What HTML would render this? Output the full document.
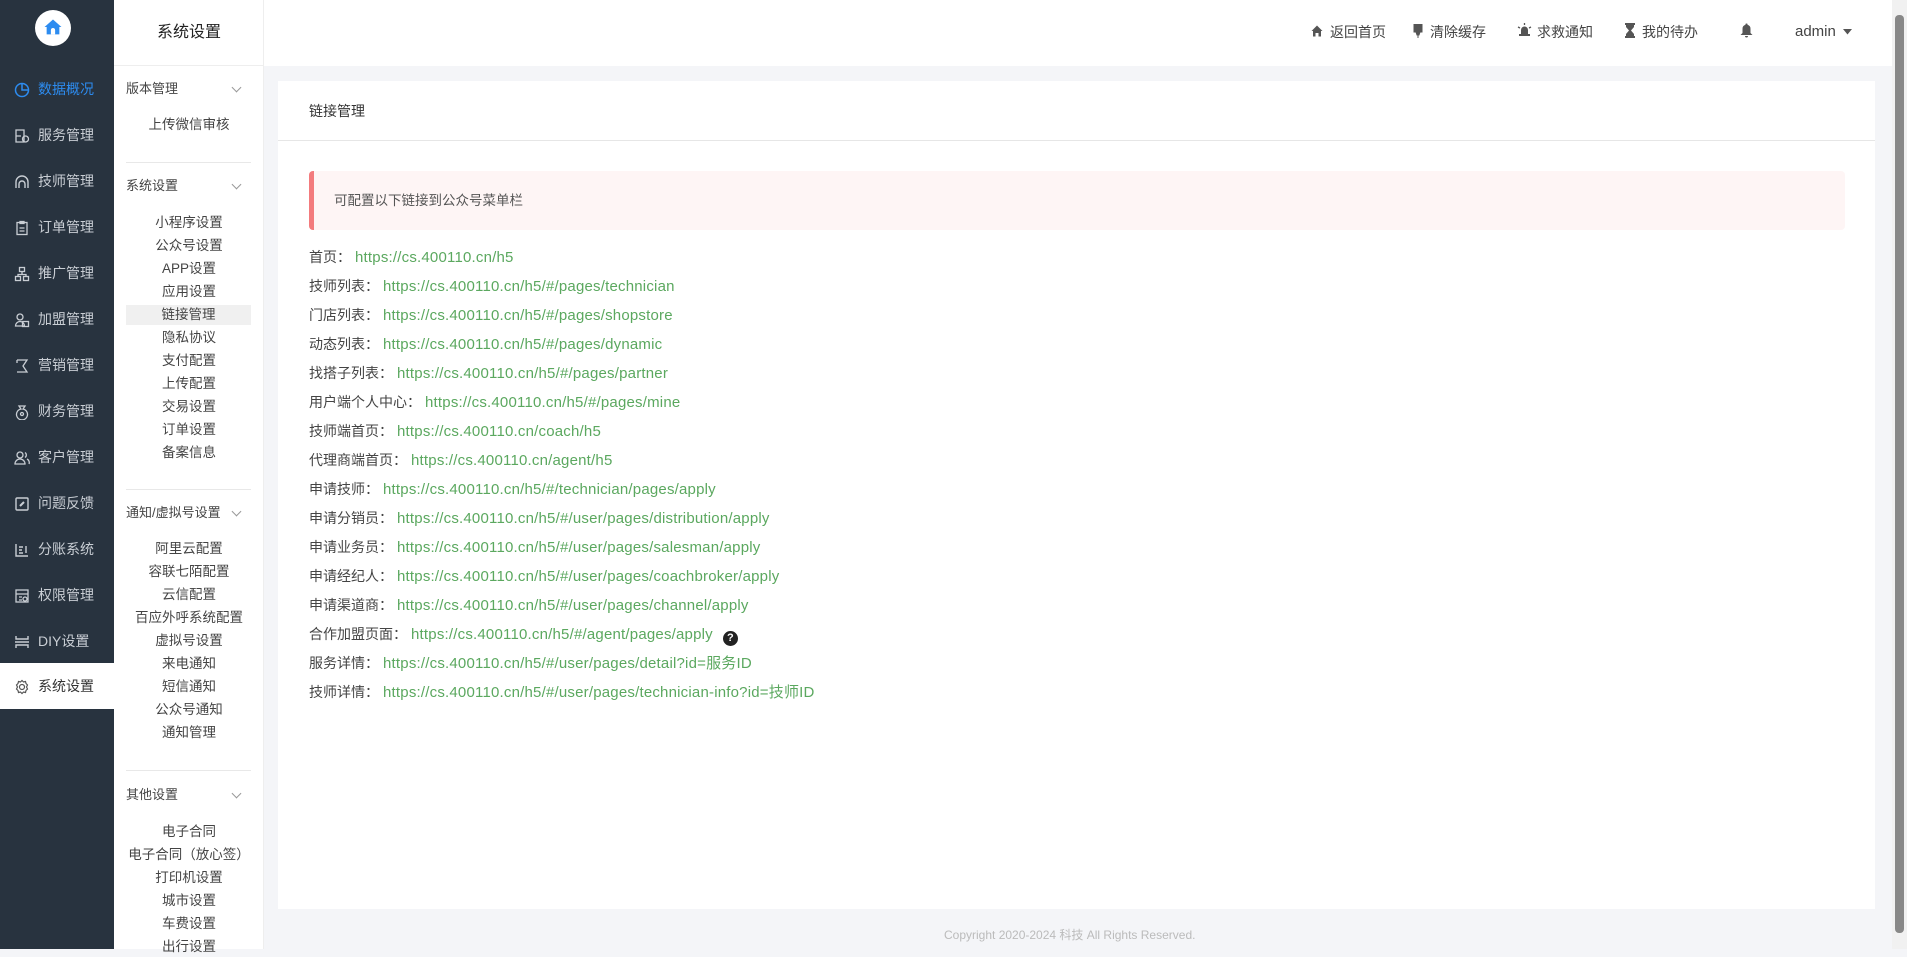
<!DOCTYPE html>
<html><head><meta charset="utf-8">
<style>
*{margin:0;padding:0;box-sizing:border-box}
body{width:1907px;height:949px;overflow:hidden;font-family:"Liberation Sans","Noto Sans CJK SC",sans-serif;background:#f4f5f8;position:relative;color:#333}
.abs{position:absolute;white-space:nowrap}
#side{position:absolute;left:0;top:0;width:114px;height:949px;background:#28333f}
.logo{position:absolute;left:35px;top:10px;width:36px;height:36px;border-radius:50%;background:#fff}
.mi{position:absolute;left:0;width:114px;height:46px;line-height:46px;font-size:14px;color:#c9ced4;padding-left:38px}
.mi svg{position:absolute;left:14px;top:16px}
.mi.on{color:#2d8cf0}
.mi.act{background:#fff;color:#333}
#col2{position:absolute;left:114px;top:0;width:150px;height:949px;background:#fff;border-right:1px solid #eee}
.c2t{position:absolute;left:0;top:0;width:150px;height:66px;line-height:66px;text-align:center;font-size:16px;color:#222;border-bottom:1px solid #eee}
.sec{position:absolute;left:12px;font-size:13px;color:#444;line-height:20px}
.chev{position:absolute;left:119px;width:7px;height:7px;border-right:1px solid #999;border-bottom:1px solid #999;transform:rotate(45deg)}
.it{position:absolute;left:0;width:150px;text-align:center;font-size:13.5px;color:#444;line-height:20px}
.it.sel{left:12px;width:125px;background:#f0f0f0}
.div{position:absolute;left:12px;width:125px;height:1px;background:#e8e8e8}
#top{position:absolute;left:264px;top:0;width:1628px;height:66px;background:#fff}
.tn{position:absolute;top:22px;font-size:14px;color:#444;line-height:20px}
#card{position:absolute;left:278px;top:81px;width:1597px;height:828px;background:#fff}
.ch{position:absolute;left:0;top:0;width:1597px;height:60px;border-bottom:1px solid #e6e6e6;padding-left:31px;line-height:60px;font-size:14px;color:#333}
.alert{position:absolute;left:31px;top:90px;width:1536px;height:59px;background:#fef5f5;border-left:5px solid #f37b7d;border-radius:4px;padding-left:20px;line-height:59px;font-size:13.5px;color:#555}
.row{position:absolute;left:31px;font-size:14px;line-height:20px;color:#444}
.row a{color:#5ba85f;text-decoration:none;margin-left:4px;font-size:15px;letter-spacing:0.2px}
#sb{position:absolute;left:1892px;top:0;width:15px;height:949px;background:#f1f1f1}
#sb .th{position:absolute;left:3px;top:15px;width:9px;height:918px;background:#888;border-radius:4px}
</style></head><body>
<div id="side">
 <div class="logo"><svg width="36" height="36" viewBox="0 0 34 34"><path d="M17 9 L25 16 H23 V23 H11 V16 H9 Z" fill="#2d8cf0"/><path d="M15 23 V19 A2 2 0 0 1 19 19 V23" fill="#fff"/></svg></div>
 <div class="mi on" style="top:66px"><svg width="16" height="16" viewBox="0 0 16 16" fill="none" stroke="#2d8cf0" stroke-width="1.5"><circle cx="8" cy="8" r="6.5"/><path d="M8 1.5V8H14.5"/></svg>数据概况</div>
 <div class="mi" style="top:112px"><svg width="16" height="16" viewBox="0 0 16 16" fill="none" stroke="#c9ced4" stroke-width="1.3"><path d="M2 2h8v12H2z M2 8h5"/><circle cx="11.5" cy="11" r="3"/></svg>服务管理</div>
 <div class="mi" style="top:158px"><svg width="16" height="16" viewBox="0 0 16 16" fill="none" stroke="#c9ced4" stroke-width="1.4"><path d="M2 14V8a6 6 0 0 1 12 0v6"/><path d="M5 14v-4a3 3 0 0 1 6 0v4"/></svg>技师管理</div>
 <div class="mi" style="top:204px"><svg width="16" height="16" viewBox="0 0 16 16" fill="none" stroke="#c9ced4" stroke-width="1.3"><rect x="3" y="2.5" width="10" height="12"/><path d="M6 1.5h4v2H6zM5.5 8h5M5.5 11h5"/></svg>订单管理</div>
 <div class="mi" style="top:250px"><svg width="16" height="16" viewBox="0 0 16 16" fill="none" stroke="#c9ced4" stroke-width="1.3"><rect x="5.5" y="1.5" width="5" height="4"/><rect x="1.5" y="10.5" width="5" height="4"/><rect x="9.5" y="10.5" width="5" height="4"/><path d="M8 5.5v3M4 10.5v-2h8v2"/></svg>推广管理</div>
 <div class="mi" style="top:296px"><svg width="16" height="16" viewBox="0 0 16 16" fill="none" stroke="#c9ced4" stroke-width="1.3"><circle cx="6" cy="5" r="3"/><path d="M1.5 14a4.5 4.5 0 0 1 9 0z"/><rect x="8.5" y="9.5" width="6" height="5"/></svg>加盟管理</div>
 <div class="mi" style="top:342px"><svg width="16" height="16" viewBox="0 0 16 16" fill="none" stroke="#c9ced4" stroke-width="1.3"><path d="M3 2h10l-4 6 4 6H3M3 2v3"/></svg>营销管理</div>
 <div class="mi" style="top:388px"><svg width="16" height="16" viewBox="0 0 16 16" fill="none" stroke="#c9ced4" stroke-width="1.3"><path d="M5 2h6l-2 3a5.5 5.5 0 1 1-2 0z"/><circle cx="8" cy="10" r="1.5"/></svg>财务管理</div>
 <div class="mi" style="top:434px"><svg width="16" height="16" viewBox="0 0 16 16" fill="none" stroke="#c9ced4" stroke-width="1.3"><circle cx="6" cy="5" r="3"/><path d="M1 14a5 5 0 0 1 10 0zM11 2.5a3 3 0 0 1 0 5M13 9a4 4 0 0 1 2 5"/></svg>客户管理</div>
 <div class="mi" style="top:480px"><svg width="16" height="16" viewBox="0 0 16 16" fill="none" stroke="#c9ced4" stroke-width="1.4"><rect x="2" y="2" width="12" height="12" rx="1"/><path d="M6 10l4-4" stroke-width="2"/></svg>问题反馈</div>
 <div class="mi" style="top:526px"><svg width="16" height="16" viewBox="0 0 16 16" fill="none" stroke="#c9ced4" stroke-width="1.4"><path d="M2 2v12h12M5 5h4M5 8h3M5 11h4M12 4v7"/></svg>分账系统</div>
 <div class="mi" style="top:572px"><svg width="16" height="16" viewBox="0 0 16 16" fill="none" stroke="#c9ced4" stroke-width="1.3"><rect x="2" y="2" width="12" height="12"/><path d="M2 6h12M5 9h3M5 12h3"/><circle cx="11" cy="11" r="2"/></svg>权限管理</div>
 <div class="mi" style="top:618px"><svg width="16" height="16" viewBox="0 0 16 16" fill="none" stroke="#c9ced4" stroke-width="1.4"><path d="M2 2v3h12V2M1 8h14M2 14v-3h12v3"/></svg>DIY设置</div>
 <div class="mi act" style="top:663px"><svg width="16" height="16" viewBox="0 0 16 16" fill="none" stroke="#555" stroke-width="1.2"><circle cx="8" cy="8" r="2.5"/><path d="M8 1.5l1.5 1.5 2-.5.5 2 1.5 1.5-1 2 1 2-1.5 1.5-.5 2-2-.5L8 14.5 6.5 13l-2 .5-.5-2L2.5 10l1-2-1-2L4 4.5l.5-2 2 .5z"/></svg>系统设置</div>
</div>
<div id="col2">
 <div class="c2t">系统设置</div>
 <div class="sec" style="top:79px">版本管理</div><div class="chev" style="top:84px"></div>
 <div class="it" style="top:115px">上传微信审核</div>
 <div class="div" style="top:162px"></div>
 <div class="sec" style="top:176px">系统设置</div><div class="chev" style="top:181px"></div>
 <div class="it" style="top:213px">小程序设置</div>
 <div class="it" style="top:236px">公众号设置</div>
 <div class="it" style="top:259px">APP设置</div>
 <div class="it" style="top:282px">应用设置</div>
 <div class="it sel" style="top:305px;width:125px">链接管理</div>
 <div class="it" style="top:328px">隐私协议</div>
 <div class="it" style="top:351px">支付配置</div>
 <div class="it" style="top:374px">上传配置</div>
 <div class="it" style="top:397px">交易设置</div>
 <div class="it" style="top:420px">订单设置</div>
 <div class="it" style="top:443px">备案信息</div>
 <div class="div" style="top:489px"></div>
 <div class="sec" style="top:503px">通知/虚拟号设置</div><div class="chev" style="top:508px"></div>
 <div class="it" style="top:539px">阿里云配置</div>
 <div class="it" style="top:562px">容联七陌配置</div>
 <div class="it" style="top:585px">云信配置</div>
 <div class="it" style="top:608px">百应外呼系统配置</div>
 <div class="it" style="top:631px">虚拟号设置</div>
 <div class="it" style="top:654px">来电通知</div>
 <div class="it" style="top:677px">短信通知</div>
 <div class="it" style="top:700px">公众号通知</div>
 <div class="it" style="top:723px">通知管理</div>
 <div class="div" style="top:770px"></div>
 <div class="sec" style="top:785px">其他设置</div><div class="chev" style="top:790px"></div>
 <div class="it" style="top:822px">电子合同</div>
 <div class="it" style="top:845px">电子合同（放心签）</div>
 <div class="it" style="top:868px">打印机设置</div>
 <div class="it" style="top:891px">城市设置</div>
 <div class="it" style="top:914px">车费设置</div>
 <div class="it" style="top:937px">出行设置</div>
</div>
<div id="top"></div>
<svg class="abs" style="left:1311px;top:25px" width="12" height="12" viewBox="0 0 12 12"><path d="M6 0.5L11.5 6H10V11.5H7.5V8H4.5V11.5H2V6H0.5Z" fill="#555"/></svg>
<div class="tn" style="left:1330px">返回首页</div>
<svg class="abs" style="left:1413px;top:24px" width="10" height="14" viewBox="0 0 10 14"><path d="M1 0h8v8H1zM3 8h4l-1 3H4zM5 11v3" fill="#555" stroke="#555"/></svg>
<div class="tn" style="left:1430px">清除缓存</div>
<svg class="abs" style="left:1517px;top:23px" width="15" height="15" viewBox="0 0 15 15" fill="#555"><path d="M4 7a3.5 3.5 0 0 1 7 0v4H4zM2 11h11v2H2z"/><path d="M7.5 0v2M1 4l2 1M14 4l-2 1" stroke="#555" stroke-width="1.3"/></svg>
<div class="tn" style="left:1537px">求救通知</div>
<svg class="abs" style="left:1625px;top:23px" width="10" height="15" viewBox="0 0 10 15" fill="#555"><path d="M0 0h10v2H9v2L6 7.5 9 11v2h1v2H0v-2h1v-2l3-3.5L1 4V2H0z"/></svg>
<div class="tn" style="left:1642px">我的待办</div>
<svg class="abs" style="left:1740px;top:23px" width="13" height="15" viewBox="0 0 13 15" fill="#555"><path d="M6.5 0.5a1 1 0 0 1 1 1.2A4 4 0 0 1 10.5 6v4l2 2H0.5l2-2V6A4 4 0 0 1 5.5 1.7a1 1 0 0 1 1-1.2zM5 13h3a1.5 1.5 0 0 1-3 0z"/></svg>
<div class="tn" style="left:1795px;font-size:15px">admin</div>
<svg class="abs" style="left:1843px;top:29px" width="9" height="6" viewBox="0 0 9 6"><path d="M0 0h9L4.5 5.5z" fill="#555"/></svg>
<div id="card">
 <div class="ch">链接管理</div>
 <div class="alert">可配置以下链接到公众号菜单栏</div>
 <div class="row" style="top:166px">首页：<a>https://cs.400110.cn/h5</a></div>
 <div class="row" style="top:195px">技师列表：<a>https://cs.400110.cn/h5/#/pages/technician</a></div>
 <div class="row" style="top:224px">门店列表：<a>https://cs.400110.cn/h5/#/pages/shopstore</a></div>
 <div class="row" style="top:253px">动态列表：<a>https://cs.400110.cn/h5/#/pages/dynamic</a></div>
 <div class="row" style="top:282px">找搭子列表：<a>https://cs.400110.cn/h5/#/pages/partner</a></div>
 <div class="row" style="top:311px">用户端个人中心：<a>https://cs.400110.cn/h5/#/pages/mine</a></div>
 <div class="row" style="top:340px">技师端首页：<a>https://cs.400110.cn/coach/h5</a></div>
 <div class="row" style="top:369px">代理商端首页：<a>https://cs.400110.cn/agent/h5</a></div>
 <div class="row" style="top:398px">申请技师：<a>https://cs.400110.cn/h5/#/technician/pages/apply</a></div>
 <div class="row" style="top:427px">申请分销员：<a>https://cs.400110.cn/h5/#/user/pages/distribution/apply</a></div>
 <div class="row" style="top:456px">申请业务员：<a>https://cs.400110.cn/h5/#/user/pages/salesman/apply</a></div>
 <div class="row" style="top:485px">申请经纪人：<a>https://cs.400110.cn/h5/#/user/pages/coachbroker/apply</a></div>
 <div class="row" style="top:514px">申请渠道商：<a>https://cs.400110.cn/h5/#/user/pages/channel/apply</a></div>
 <div class="row" style="top:543px">合作加盟页面：<a>https://cs.400110.cn/h5/#/agent/pages/apply</a><span style="display:inline-block;width:15px;height:15px;border-radius:50%;background:#222;color:#fff;font-size:11px;line-height:15px;text-align:center;font-weight:bold;margin-left:10px;vertical-align:-2px">?</span></div>
 <div class="row" style="top:572px">服务详情：<a>https://cs.400110.cn/h5/#/user/pages/detail?id=服务ID</a></div>
 <div class="row" style="top:601px">技师详情：<a>https://cs.400110.cn/h5/#/user/pages/technician-info?id=技师ID</a></div>
</div>
<div class="abs" style="left:944px;top:926px;font-size:12px;color:#bbb">Copyright 2020-2024 科技 All Rights Reserved.</div>
<div id="sb"><div class="th"></div></div>
</body></html>
